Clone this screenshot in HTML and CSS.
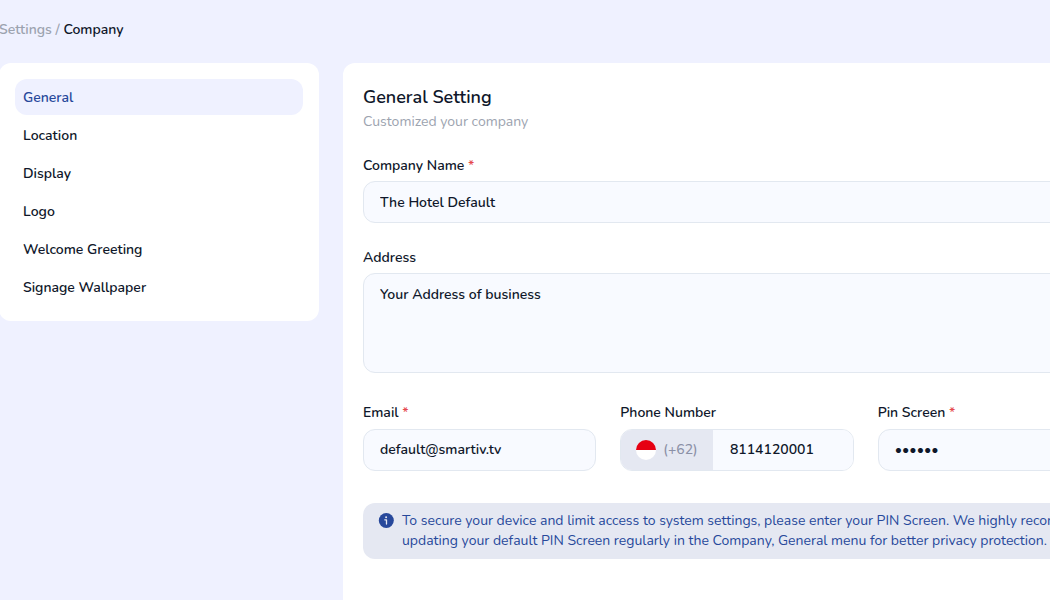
FILE: index.html
```html
<!DOCTYPE html>
<html lang="en">
<head>
    <meta charset="UTF-8">
    <meta name="viewport" content="width=device-width, initial-scale=1.0">
    <link rel="stylesheet" href="styles.css">
    <title>Company Settings</title>
</head>
<body>
    <div class="page">
        <nav class="breadcrumb">
            <a href="#">Settings</a> <span class="slash">/</span> <strong>Company</strong>
        </nav>

        <div class="layout">
            <aside class="menu">
                <a href="#" class="menu-item active">General</a>
                <a href="#" class="menu-item">Location</a>
                <a href="#" class="menu-item">Display</a>
                <a href="#" class="menu-item">Logo</a>
                <a href="#" class="menu-item">Welcome Greeting</a>
                <a href="#" class="menu-item">Signage Wallpaper</a>
            </aside>

            <main class="card">
                <h1>General Setting</h1>
                <p class="subtitle">Customized your company</p>

                <form class="form">
                    <div class="field">
                        <label for="companyName">Company Name <span class="required">*</span></label>
                        <input type="text" id="companyName" value="The Hotel Default">
                    </div>

                    <div class="field">
                        <label for="address">Address</label>
                        <textarea id="address">Your Address of business</textarea>
                    </div>

                    <div class="row">
                        <div class="field">
                            <label for="email">Email <span class="required">*</span></label>
                            <input type="text" id="email" value="default@smartiv.tv">
                        </div>
                        <div class="field">
                            <label for="phone">Phone Number</label>
                            <div class="phone">
                                <span class="prefix"><span class="flag"></span>(+62)</span>
                                <input type="text" id="phone" value="8114120001">
                            </div>
                        </div>
                        <div class="field">
                            <label for="pin">Pin Screen <span class="required">*</span></label>
                            <input type="password" id="pin" value="123456">
                        </div>
                    </div>

                    <div class="notice">
                        <svg class="info" viewBox="0 0 16 16" width="16" height="16">
                            <circle cx="8.3" cy="7.5" r="7.5" fill="#27489b"/>
                            <circle cx="8.1" cy="4.2" r="1" fill="#e5e8f2"/>
                            <path d="M6.8 6.8h1.7v4.2" fill="none" stroke="#e5e8f2" stroke-width="1.3" stroke-linecap="round" stroke-linejoin="round"/>
                        </svg>
                        <p>
                            To secure your device and limit access to system settings, please enter your PIN Screen. We highly recommend<br>
                            updating your default PIN Screen regularly in the Company, General menu for better privacy protection.
                        </p>
                    </div>
                </form>
            </main>
        </div>
    </div>
</body>
</html>
```

FILE: styles.css
```css
* {
    box-sizing: border-box;
}

body {
    margin: 0;
    height: 600px;
    overflow: hidden;
    background: #eff1ff;
    color: #0f172a;
    font-family: Nunito, Lato, sans-serif;
    font-size: 14px;
    font-weight: 600;
    line-height: 20px;
}

a {
    color: inherit;
    text-decoration: none;
}

.page {
    width: 1132px;
    height: 600px;
    margin-left: -1px;
    padding-top: 20px;
}

.breadcrumb {
    color: #9ca3af;
    margin-bottom: 23px;
    white-space: nowrap;
}

.breadcrumb strong {
    color: #0f172a;
    font-weight: 600;
}

.layout {
    display: flex;
    align-items: flex-start;
    gap: 24px;
}

.menu {
    display: flex;
    flex-direction: column;
    gap: 2px;
    width: 320px;
    height: 258px;
    padding: 16px;
    background: #fff;
    border-radius: 12px;
}

.menu-item {
    padding: 9px 8px 7px;
    border-radius: 12px;
}

.menu-item.active {
    background: #eff1ff;
    color: #27489b;
}

.card {
    width: 788px;
    height: 537px;
    padding: 20px;
    background: #fff;
    border-radius: 12px 12px 0 0;
}

h1 {
    margin: 0 0 1px;
    font-size: 18px;
    font-weight: 600;
    line-height: 28px;
}

.subtitle {
    margin: 0 0 24px;
    color: #9ca3af;
    font-weight: 400;
}

.field {
    display: flex;
    flex-direction: column;
    gap: 5px;
    margin-bottom: 24px;
}

.required {
    color: #e5484d;
}

input,
textarea {
    display: block;
    width: 100%;
    height: 42px;
    margin: 0;
    padding: 10px 16px;
    background: #f8faff;
    border: 1px solid #e2e8f0;
    border-radius: 12px;
    color: inherit;
    font: inherit;
    outline: none;
}

.field + .field {
    padding-top: 1px;
}

.row .field {
    gap: 6px;
    padding-top: 0;
}

textarea {
    height: 100px;
    padding-top: 11px;
    resize: none;
}

.row {
    display: grid;
    grid-template-columns: repeat(3, 1fr);
    gap: 24px;
    padding-top: 6px;
}

.row input {
    padding-bottom: 11px;
}

.phone {
    display: flex;
    height: 42px;
    border: 1px solid #e2e8f0;
    border-radius: 12px;
    overflow: hidden;
}

.phone input {
    flex: 1;
    min-width: 0;
    height: 40px;
    padding-left: 16.6px;
    border: 0;
    border-radius: 0;
}

.prefix {
    display: flex;
    align-items: center;
    gap: 7.5px;
    width: 92px;
    padding-left: 14.5px;
    padding-bottom: 1px;
    background: #e5e8f2;
    color: #8b90a7;
    font-weight: 500;
}

.flag {
    width: 20px;
    height: 20px;
    border-radius: 50%;
    background: linear-gradient(#e60012 50%, #fff 50%);
}

.notice {
    display: flex;
    gap: 8px;
    margin-top: 8px;
    padding: 8px 15px;
    background: #e5e8f2;
    border-radius: 12px;
    color: #27489b;
    font-weight: 400;
    white-space: nowrap;
}

.notice p {
    margin: 0;
}

.info {
    flex: none;
    margin-top: 2px;
}
```
